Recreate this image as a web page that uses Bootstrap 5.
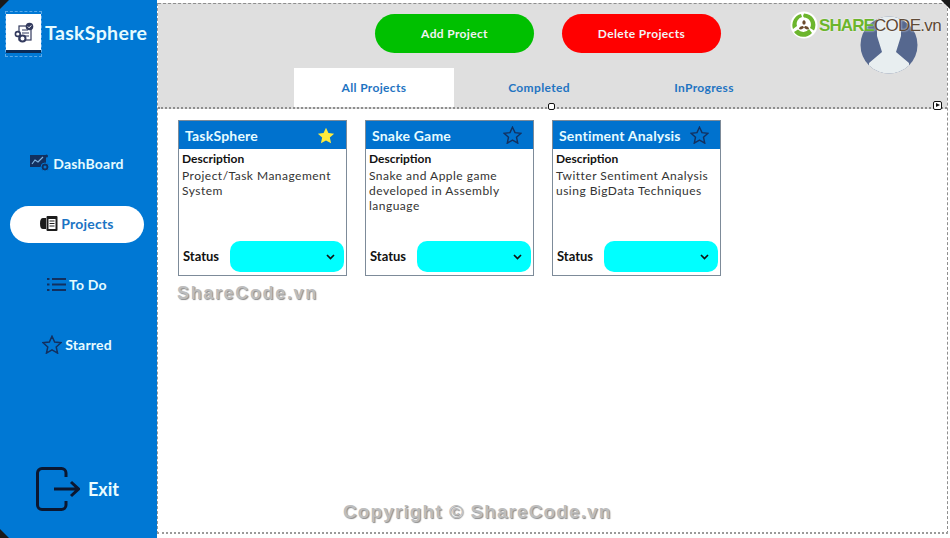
<!DOCTYPE html>
<html lang="en">
<head>
<meta charset="utf-8">
<title>TaskSphere</title>
<link rel="stylesheet" href="https://cdn.jsdelivr.net/npm/bootstrap@5.3.0/dist/css/bootstrap.min.css">
<style>
html,body{height:538px;overflow:hidden;background:#fff}
body{font-family:"Lato","Liberation Sans",sans-serif;position:relative}
.app-shell{height:538px}
.side-rail{width:157px;background:#0078d4;flex:none;position:relative}
.brand-zone{height:100px;padding:14px 0 0 6px;gap:4px}
.brand-tile{width:35px;height:39px;background:#fff;border-bottom:3px solid #0b2a55;position:relative;flex:none}
.brand-tile::before{content:"";position:absolute;inset:-3px -1px -7px -1px;border:1px dashed #5aa8e8}
.brand-name{font-size:19.5px;font-weight:700;color:#e6fbff;line-height:38px;letter-spacing:.35px}
.rail-menu{margin-top:45.5px;gap:23.5px;padding:0 10px;width:154px}
.rail-link{height:37px;border-radius:19px;color:#e6fbff;font-weight:700;font-size:14px;gap:3px;letter-spacing:.2px;text-decoration:none;padding-bottom:2px}
.rail-link.picked{background:#fff;color:#1b74c4}
.exit-row{position:absolute;left:36px;top:467px;gap:8px;color:#eafcff;font-weight:700;font-size:18px}
.main-area{min-width:0;margin:3px 2px 4px 0;border-left:1px dashed #9a9a9a;border-right:1px dashed #8e8e8e;border-bottom:2px dotted #9a9a9a}
.top-band{height:106px;background:#dfdfdf;border-top:1px dashed #8e8e8e;border-bottom:2px dotted #8e8e8e;position:relative;flex:none}
.action-row{padding:10px 0 0 217px;gap:28px}
.pill-act{width:159px;height:39px;border-radius:20px;border:0;color:#f2f2f2;font-weight:700;font-size:12px;letter-spacing:.35px;padding:1px 0 0}
.pill-add{background:#00c000}
.pill-del{background:#ff0000}
.tab-row{padding:15px 0 0 136px;gap:5px;margin:0;list-style:none}
.tab-cell{width:160px;height:39px;color:#1f74c2;font-weight:700;font-size:12px;letter-spacing:.35px;text-decoration:none;padding-top:0}
.tab-cell.picked{background:#fff}
.band-handle{position:absolute;width:7px;height:7px;background:#fff;border:1px solid #111;border-radius:2px}
.hd-mid{left:390px;top:99px}
.hd-end{left:775px;top:97px;width:9px;height:9px}
.hd-end::after{content:"";position:absolute;left:2px;top:1px;border-left:4px solid #111;border-top:2.500px solid transparent;border-bottom:2.500px solid transparent}
.avatar-spot{position:absolute;left:702px;top:12px}
.cards-zone{padding:11px 0 0 20px;gap:18px}
.task-box{width:169px;height:156px;border:1px solid #7d8b99;border-radius:0;background:#fff}
.task-head{height:28px;background:#0072ce;color:#e6fbff;font-weight:700;font-size:14px;padding:0 7px 0 6px;letter-spacing:.2px;flex:none}
.task-body{padding:2px 3px 4px;position:relative;flex:1}
.desc-label{font-weight:700;font-size:12px;line-height:15px;color:#111}
.desc-text{font-size:12px;line-height:15px;color:#333;letter-spacing:.48px;margin:2px 0 0}
.status-row{position:absolute;left:4px;right:2px;bottom:3px;gap:10px}
.status-label{font-weight:700;font-size:13px;color:#111;width:37px;flex:none;white-space:nowrap}
.status-pick{flex:1;height:31px;border-radius:10px;background:#00ffff;padding-right:9px}
.wm-text{position:absolute;font-family:"Liberation Sans",sans-serif;font-weight:700;color:#bdbdbd;text-shadow:1px 1px 1px #8c8c8c;white-space:nowrap}
.wm-one{left:177px;top:280px;font-size:18px;letter-spacing:1.650px}
.wm-two{left:343px;top:498px;font-size:19px;letter-spacing:1.100px}
.wm-logo{position:absolute;left:790px;top:11px;gap:1px}
.wm-label{padding-top:1px}
.wm-share{font-family:"Liberation Sans",sans-serif;font-weight:700;font-size:17px;color:#6cb52d;letter-spacing:-.9px;text-shadow:0 0 2px #fff}
.wm-code{font-family:"Liberation Sans",sans-serif;font-size:17px;color:#5f4a36;letter-spacing:-.7px;text-shadow:0 0 2px #fff}
.corner-mark{position:absolute;width:9px;height:9px;background:#1a1a1a}
.cm-tl{left:0;top:0;clip-path:polygon(0 0,100% 0,0 100%)}
.cm-bl{left:0;bottom:0;clip-path:polygon(0 0,100% 100%,0 100%)}
.cm-tr{right:0;top:0;clip-path:polygon(0 0,100% 0,100% 100%)}
</style>
</head>
<body>
<div class="app-shell d-flex">
  <aside class="side-rail d-flex flex-column">
    <div class="brand-zone d-flex align-items-start">
      <div class="brand-tile d-flex align-items-center justify-content-center">
        <svg width="20" height="21" viewBox="0 0 20 21">
          <rect x="5" y="4" width="12" height="14" fill="#fff" stroke="#333a5e" stroke-width="1.2"/>
          <path d="M8 8h6M8 11h7M10 14h5" stroke="#333a5e" stroke-width="1.1"/>
          <circle cx="15.5" cy="4.5" r="3.8" fill="#333a5e"/>
          <path d="M13.8 4.5l1.3 1.3 2.2-2.4" stroke="#fff" stroke-width="1" fill="none"/>
          <circle cx="3.8" cy="12" r="2.4" fill="#fff" stroke="#333a5e" stroke-width="1.6"/>
          <circle cx="8.5" cy="16.5" r="3" fill="#fff" stroke="#333a5e" stroke-width="2"/>
        </svg>
      </div>
      <div class="brand-name">TaskSphere</div>
    </div>
    <nav class="rail-menu d-flex flex-column">
      <a class="rail-link d-flex align-items-center justify-content-center" href="#">
        <svg width="20" height="18" viewBox="0 0 20 18">
          <rect x="0" y="1" width="16" height="12" fill="#12305f"/>
          <path d="M2 10l3-4 3 2 5-5" stroke="#7fb3e0" stroke-width="1.2" fill="none"/>
          <circle cx="15" cy="13" r="4" fill="#12305f" stroke="#0078d4"/>
          <circle cx="15" cy="13" r="1.5" fill="#0078d4"/>
          <circle cx="16.500" cy="2" r="1.500" fill="#12305f"/>
        </svg>
        <span>DashBoard</span>
      </a>
      <a class="rail-link picked d-flex align-items-center justify-content-center" href="#">
        <svg width="18" height="15" viewBox="0 0 18 15">
          <path d="M3 2h3v11H3Q0 13 0 7.500T3 2z" fill="#1c1c1c"/>
          <rect x="6.500" y="0" width="11" height="15" rx="1" fill="#1c1c1c"/>
          <rect x="8.500" y="3" width="7" height="10" fill="#fff"/>
          <path d="M9.500 5h5M9.500 7.500h5M9.500 10h5" stroke="#1c1c1c"/>
        </svg>
        <span>Projects</span>
      </a>
      <a class="rail-link d-flex align-items-center justify-content-center" href="#">
        <svg width="19" height="15" viewBox="0 0 19 15">
          <path d="M5 2h14M5 7.500h14M5 13h14" stroke="#12305f" stroke-width="2"/>
          <path d="M0 2h2.500M0 7.500h2.500M0 13h2.500" stroke="#12305f" stroke-width="2"/>
        </svg>
        <span>To Do</span>
      </a>
      <a class="rail-link d-flex align-items-center justify-content-center" href="#">
        <svg width="20" height="19" viewBox="0 0 24 23">
          <path d="M12 1.500l3.200 7 7.600.8-5.700 5.100 1.600 7.500L12 18.100l-6.700 3.800 1.600-7.500L1.200 9.300l7.600-.8z" fill="none" stroke="#12305f" stroke-width="1.800"/>
        </svg>
        <span>Starred</span>
      </a>
    </nav>
    <a class="exit-row d-flex align-items-center text-decoration-none" href="#">
      <svg width="44" height="44" viewBox="0 0 44 44">
        <path d="M30 10V6a4.500 4.500 0 0 0-4.500-4.500H6A4.500 4.500 0 0 0 1.500 6v32A4.500 4.500 0 0 0 6 42.500h19.500A4.500 4.500 0 0 0 30 38v-4" fill="none" stroke="#0b1730" stroke-width="3"/>
        <path d="M18 22h24M35 15l7.500 7-7.500 7" fill="none" stroke="#0b1730" stroke-width="3"/>
      </svg>
      <span>Exit</span>
    </a>
  </aside>
  <main class="main-area flex-grow-1 d-flex flex-column">
    <header class="top-band">
      <div class="action-row d-flex">
        <button type="button" class="btn pill-act pill-add">Add Project</button>
        <button type="button" class="btn pill-act pill-del">Delete Projects</button>
      </div>
      <div class="tab-row d-flex">
        <a class="tab-cell picked d-flex align-items-center justify-content-center" href="#">All Projects</a>
        <a class="tab-cell d-flex align-items-center justify-content-center" href="#">Completed</a>
        <a class="tab-cell d-flex align-items-center justify-content-center" href="#">InProgress</a>
      </div>
      <svg class="avatar-spot" width="58" height="58" viewBox="0 0 58 58">
        <defs><clipPath id="av"><circle cx="29" cy="29" r="28.500"/></clipPath></defs>
        <g clip-path="url(#av)">
          <rect width="58" height="58" fill="#56688f"/>
          <path d="M17 0H41V20L36 36L49 47V58H9V47L22 36L17 20Z" fill="#e8eef0"/>
        </g>
      </svg>
      <span class="band-handle hd-mid"></span>
      <span class="band-handle hd-end"></span>
    </header>
    <section class="cards-zone d-flex align-items-start">
      <article class="card task-box">
        <div class="task-head d-flex align-items-center justify-content-between">
          <span>TaskSphere</span>
          <svg class="me-1" width="18" height="17" viewBox="0 0 24 23"><path d="M12 1l3.300 7.200 7.700.9-5.800 5.200 1.700 7.700L12 18.100 5.100 22l1.700-7.700L1 9.100l7.700-.9z" fill="#ffeb3b"/></svg>
        </div>
        <div class="task-body">
          <div class="desc-label">Description</div>
          <p class="desc-text">Project/Task Management System</p>
          <div class="status-row d-flex align-items-center">
            <span class="status-label">Status</span>
            <div class="status-pick d-flex align-items-center justify-content-end">
              <svg width="9" height="6" viewBox="0 0 9 6"><path d="M1 1l3.500 3.500L8 1" fill="none" stroke="#111" stroke-width="1.700"/></svg>
            </div>
          </div>
        </div>
      </article>
      <article class="card task-box">
        <div class="task-head d-flex align-items-center justify-content-between">
          <span>Snake Game</span>
          <svg class="me-1" width="19" height="18" viewBox="0 0 24 23"><path d="M12 1.500l3.200 7 7.600.8-5.700 5.100 1.600 7.500L12 18.100l-6.700 3.800 1.600-7.500L1.200 9.300l7.600-.8z" fill="none" stroke="#12305f" stroke-width="1.800"/></svg>
        </div>
        <div class="task-body">
          <div class="desc-label">Description</div>
          <p class="desc-text">Snake and Apple game developed in Assembly language</p>
          <div class="status-row d-flex align-items-center">
            <span class="status-label">Status</span>
            <div class="status-pick d-flex align-items-center justify-content-end">
              <svg width="9" height="6" viewBox="0 0 9 6"><path d="M1 1l3.500 3.500L8 1" fill="none" stroke="#111" stroke-width="1.700"/></svg>
            </div>
          </div>
        </div>
      </article>
      <article class="card task-box">
        <div class="task-head d-flex align-items-center justify-content-between">
          <span>Sentiment Analysis</span>
          <svg class="me-1" width="19" height="18" viewBox="0 0 24 23"><path d="M12 1.500l3.200 7 7.600.8-5.700 5.100 1.600 7.500L12 18.100l-6.700 3.800 1.600-7.500L1.200 9.300l7.600-.8z" fill="none" stroke="#12305f" stroke-width="1.800"/></svg>
        </div>
        <div class="task-body">
          <div class="desc-label">Description</div>
          <p class="desc-text">Twitter Sentiment Analysis using BigData Techniques</p>
          <div class="status-row d-flex align-items-center">
            <span class="status-label">Status</span>
            <div class="status-pick d-flex align-items-center justify-content-end">
              <svg width="9" height="6" viewBox="0 0 9 6"><path d="M1 1l3.500 3.500L8 1" fill="none" stroke="#111" stroke-width="1.700"/></svg>
            </div>
          </div>
        </div>
      </article>
    </section>
  </main>
</div>
<div class="wm-text wm-one">ShareCode.vn</div>
<div class="wm-text wm-two">Copyright © ShareCode.vn</div>
<div class="wm-logo d-flex align-items-center">
  <svg width="28" height="28" viewBox="0 0 28 28">
    <circle cx="14" cy="14" r="13.500" fill="#fff"/>
    <path d="M14 2.500a11.500 11.500 0 0 1 10 17l-4-2.500a7 7 0 0 0-6-10.500l-1-1.500zM22 22a11.500 11.500 0 0 1-18-1l4-2.500a7 7 0 0 0 11-.5zM3 18A11.500 11.500 0 0 1 11 3l1 3a7 7 0 0 0-5 9z" fill="#6cb52d"/>
    <path d="M14 9c2 1 2 3 1 4.500h-2C12 12 12 10 14 9zM9 18c0-2 2-3 4-3l1 1.500c-1 1.500-3 2.500-5 1.500zM19 18c-2 1-4 0-5-1.500l1-1.500c2 0 4 1 4 3z" fill="#6b4a2c"/>
  </svg>
  <span class="wm-label"><span class="wm-share">SHARE</span><span class="wm-code">CODE.vn</span></span>
</div>
<span class="corner-mark cm-tl"></span>
<span class="corner-mark cm-bl"></span>
<span class="corner-mark cm-tr"></span>
</body>
</html>
